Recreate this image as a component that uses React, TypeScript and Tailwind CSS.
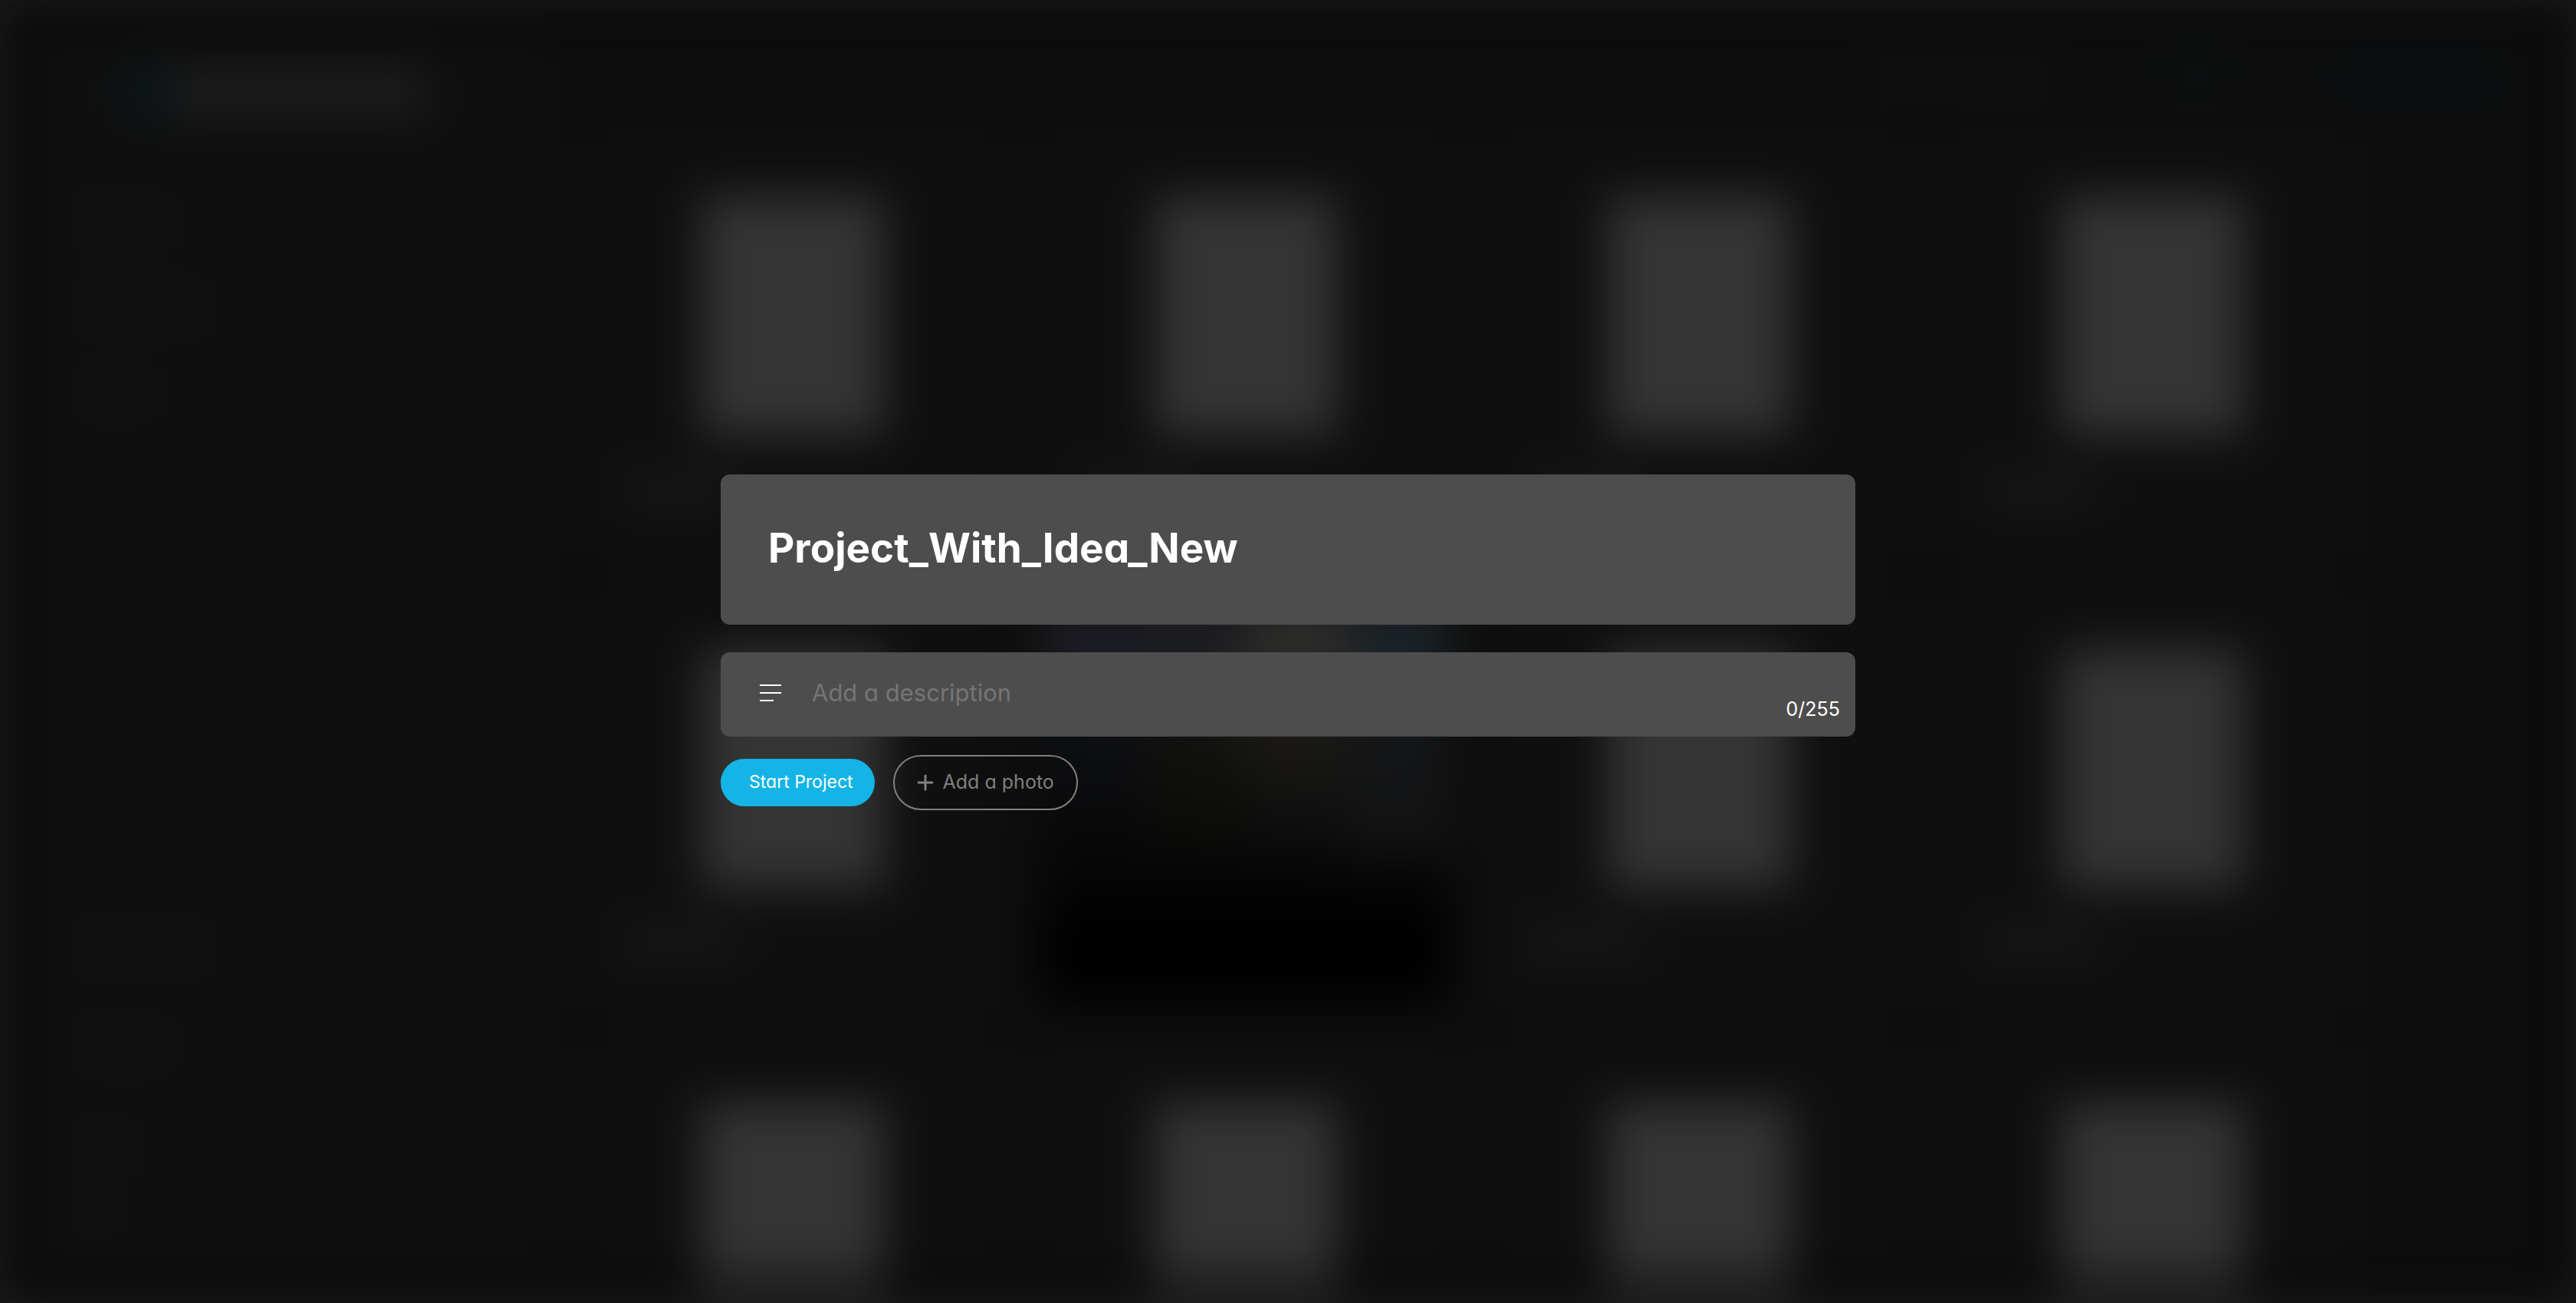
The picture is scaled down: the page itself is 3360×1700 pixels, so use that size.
import React from "react";

type Preview = "empty" | "photo";

const previews: Preview[] = [
  "empty", "empty", "empty", "empty",
  "empty", "photo", "empty", "empty",
  "empty", "empty", "empty", "empty",
];

function ProjectCard({ kind }: { kind: Preview }) {
  if (kind === "photo") {
    return (
      <div className="flex aspect-square flex-col overflow-hidden bg-black">
        <div className="flex h-[120px]">
          <div className="flex-1 bg-[#1b1c22]" />
          <div className="flex-1 bg-[#1c1d21]" />
          <div className="flex-1 bg-[#2c2b29]" />
          <div className="flex-1 bg-[#1b2126]" />
        </div>
        <div className="flex h-[220px]">
          <div className="flex-1 bg-linear-to-b from-[#101217] to-[#070707]" />
          <div className="flex-1 bg-linear-to-b from-[#161614] to-[#090907]" />
          <div className="flex-1 bg-linear-to-b from-[#22201b] to-[#0a0a0b]" />
          <div className="flex-1 bg-linear-to-b from-[#15171a] to-[#121212]" />
        </div>
        <div className="h-[60px] bg-[#050506]" />
      </div>
    );
  }
  return (
    <div className="flex aspect-square flex-col bg-[#0f0f0f]">
      <div className="mx-auto mt-[69px] h-[310px] w-[238px] shrink-0 bg-[#343434]" />
      <div className="mt-12 ml-9 h-12 w-40 shrink-0 bg-[#161616]" />
    </div>
  );
}

function Backdrop() {
  return (
    <div aria-hidden="true" className="absolute inset-0 flex overflow-hidden bg-[#1c1c1c]">
      <div className="relative flex flex-1 overflow-hidden bg-[#0d0d0d] blur-[30px]">
        <div className="flex w-[708px] shrink-0 flex-col justify-between bg-[#0f0f0f] px-24 pt-24 pb-24">
          <div>
            <div className="ml-16 flex h-12">
              <div className="w-16 bg-[#0b171d]" />
              <div className="w-[330px] bg-[#212121]" />
            </div>
            <div className="mt-32 h-8 w-32 bg-[#131313]" />
            <div className="mt-20 h-8 w-44 bg-[#131313]" />
            <div className="mt-20 h-8 w-28 bg-[#131313]" />
          </div>
          <div>
            <div className="h-8 w-44 bg-[#131313]" />
            <div className="mt-24 h-8 w-32 bg-[#131313]" />
            <div className="mt-24 h-8 w-20 bg-[#131313]" />
            <div className="mt-16 h-8 w-16 bg-[#131313]" />
          </div>
        </div>
        <div className="flex-1">
          <div className="flex h-[188px] items-center justify-end gap-32 pr-24">
            <div className="h-12 w-64 bg-[#0f0f0f]" />
            <div className="h-12 w-24 bg-[#0b0f10]" />
            <div className="h-16 w-56 bg-[#0a0d0f]" />
          </div>
          <div className="grid grid-cols-4 gap-[60px] pr-[288px] pl-[60px]">
            {previews.map((kind, i) => (
              <ProjectCard key={i} kind={kind} />
            ))}
          </div>
        </div>
        <div className="absolute inset-0 border-[44px] border-[#050505]/45" />
      </div>
    </div>
  );
}

export default function App() {
  const [title, setTitle] = React.useState("Project_With_Idea_New");
  const [description, setDescription] = React.useState("");
  return (
    <div className="relative min-h-screen overflow-hidden font-['Inter',sans-serif] [font-feature-settings:'cv11']">
      <Backdrop />
      <form
        onSubmit={(e) => e.preventDefault()}
        className="relative mx-auto flex w-1/2 max-w-[1480px] flex-col pt-[619px] text-white"
      >
        <input
          aria-label="Project name"
          value={title}
          onChange={(e) => setTitle(e.target.value)}
          className="h-[196px] w-full rounded-xl bg-[#4d4d4d] px-[62px] pb-1 text-[53px] font-bold outline-none"
        />
        <div className="mt-9 flex h-[110px] items-center rounded-xl bg-[#4d4d4d] pr-5 pl-[51px]">
          <svg viewBox="0 0 28 24" className="mb-1 h-6 w-7 shrink-0" stroke="white" strokeWidth="2" aria-hidden="true">
            <path d="M0 2h28M0 12h28M0 22h18" />
          </svg>
          <input
            aria-label="Description"
            placeholder="Add a description"
            maxLength={255}
            value={description}
            onChange={(e) => setDescription(e.target.value)}
            className="ml-10 min-w-0 flex-1 bg-transparent pb-1 text-[31px] outline-none placeholder:text-[#757575]"
          />
          <span className="self-end pb-5 text-[25px] leading-8">{description.length}/255</span>
        </div>
        <div className="mt-6 flex items-center gap-6">
          <button type="submit" className="h-[62px] rounded-full bg-[#14b4e6] pr-7 pb-[2px] pl-[37px] text-[23px]">
            Start Project
          </button>
          <button
            type="button"
            className="flex h-[72px] items-center gap-3 rounded-full border-2 border-[#808080] px-[29px] text-[25px] text-[#808080]"
          >
            <svg viewBox="0 0 22 22" className="size-[22px]" stroke="currentColor" strokeWidth="3" strokeLinecap="round" aria-hidden="true">
              <path d="M11 2v18M2 11h18" />
            </svg>
            Add a photo
          </button>
        </div>
      </form>
    </div>
  );
}
